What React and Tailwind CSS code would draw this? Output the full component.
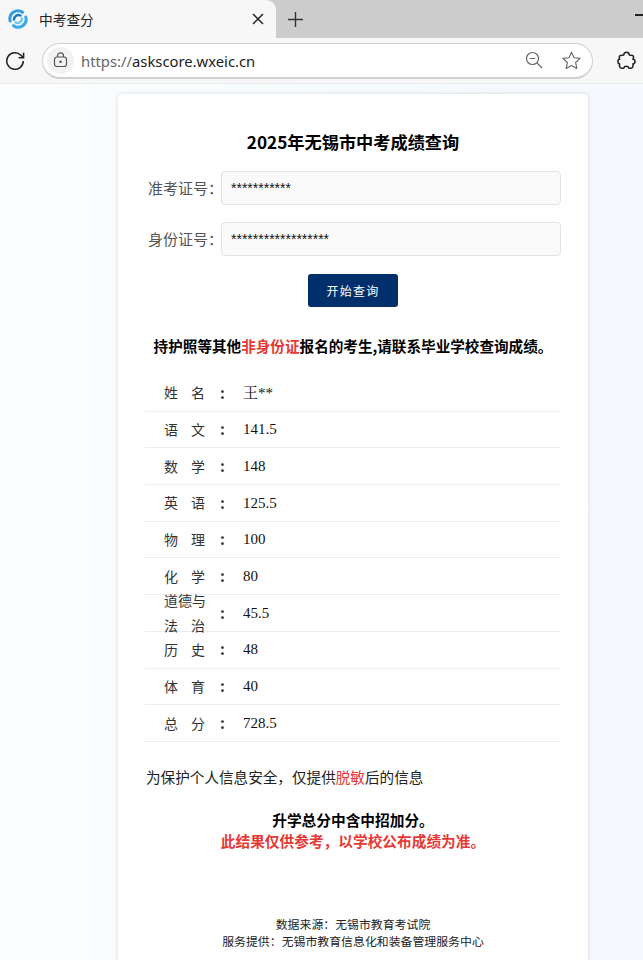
const cjk = "font-['Noto_Sans_CJK_SC','Noto_Sans',sans-serif]";

const scores = [
  { label: "姓名", value: "王**" },
  { label: "语文", value: "141.5" },
  { label: "数学", value: "148" },
  { label: "英语", value: "125.5" },
  { label: "物理", value: "100" },
  { label: "化学", value: "80" },
  { label: "道德与法治", value: "45.5" },
  { label: "历史", value: "48" },
  { label: "体育", value: "40" },
  { label: "总分", value: "728.5" },
];

function Logo() {
  return (
    <svg width="20" height="20" viewBox="0 0 20 20" fill="none" strokeLinecap="round">
      <path d="M2.200 12A8 8 0 0 1 14.500 3.300" stroke="#2f9fe0" strokeWidth="3" />
      <path d="M6 10.500A4.500 4.500 0 0 1 12.500 6.500" stroke="#1678c0" strokeWidth="2.500" />
      <path d="M17.800 8A8 8 0 0 1 5.500 16.700" stroke="#38a9e6" strokeWidth="3" />
      <path d="M14 9.500A4.500 4.500 0 0 1 7.500 13.500" stroke="#6fc8ee" strokeWidth="2.500" />
    </svg>
  );
}

function BrowserChrome() {
  return (
    <div className="bg-[#f7f7f7] border-b border-[#ebebeb]">
      <div className="flex h-[38px] bg-[#cdcdcd] overflow-hidden">
        <div className="flex items-center w-[276px] h-[38px] bg-[#f7f7f7] rounded-tr-[10px] pl-[8px] pr-[12px]">
          <Logo />
          <span className={`ml-[11px] flex-1 text-[13.700px] text-[#222] ${cjk}`}>中考查分</span>
          <svg width="12" height="12" viewBox="0 0 12 12" stroke="#222" strokeWidth="1.500" fill="none">
            <path d="M1 1l10 10M11 1L1 11" />
          </svg>
        </div>
        <div className="flex items-center ml-[11px] flex-1">
          <svg width="17" height="17" viewBox="0 0 17 17" stroke="#333" strokeWidth="1.400" fill="none">
            <path d="M8.500 1v15M1 8.500h15" />
          </svg>
          <div className="ml-auto w-[8px] h-[1.500px] bg-[#222] mb-[8px]" />
        </div>
      </div>
      <div className="flex items-center h-[45px] pl-[4px] pr-[6px]">
        <svg width="22" height="22" viewBox="0 0 20 20" stroke="#222" strokeWidth="1.400" fill="none" className="mr-[16px]">
          <path d="M17.500 10a7.500 7.500 0 1 1-2.300-5.400L17.500 7" />
          <path d="M17.800 2.500V7h-4.500" />
        </svg>
        <div className="flex items-center w-[551px] h-[36px] bg-white border border-[#d0d0d0] border-b-2 rounded-[18px] pl-[4px] pr-[10px]">
          <div className="flex items-center justify-center w-[27px] h-[27px] rounded-full bg-[#f2f2f2]">
            <svg width="15" height="16" viewBox="0 0 15 16" stroke="#555" strokeWidth="1.200" fill="none">
              <rect x="1.500" y="5" width="12" height="9.500" rx="2.500" />
              <path d="M4.500 5V3.800a3 3 0 0 1 6 0V5" />
              <circle cx="7.500" cy="9.800" r="0.700" fill="#555" />
            </svg>
          </div>
          <span className="ml-[7px] mt-[3px] flex-1 text-[14.800px] font-['Noto_Sans',sans-serif] text-[#222]">
            <span className="text-[#666]">https://</span>askscore.wxeic.cn
          </span>
          <svg width="18" height="18" viewBox="0 0 18 18" stroke="#666" strokeWidth="1.200" fill="none" className="mr-[18px]">
            <circle cx="7.500" cy="7.500" r="6" />
            <path d="M4.800 7.500h5.400M12 12l5 5" />
          </svg>
          <svg width="21" height="21" viewBox="0 0 24 24" stroke="#666" strokeWidth="1.300" fill="none" strokeLinejoin="round">
            <path d="M12 2.500l2.900 6.300 6.900.8-5.100 4.700 1.400 6.800-6.100-3.400-6.100 3.400 1.400-6.800-5.100-4.700 6.900-.8z" />
          </svg>
        </div>
        <svg width="21" height="21" viewBox="0 0 24 24" stroke="#222" strokeWidth="1.800" fill="none" strokeLinejoin="round" className="ml-auto">
          <path d="M9 5.500c0-4 6-4 6 0 0 1 3.500 0 4.500 1s.3 3.500-.2 4c3.200 0 3.200 5 0 5.500 .5 1.500.5 3-.5 4s-3 1-4.300.5c-.5-2.500-5-2.500-5.500 0-1.300.5-3.300.5-4.300-.5s-1-2.500-.5-4c-2.700-.5-2.700-5.500 0-5.500-.5-.5-.8-3 .2-4s4.600 0 4.600-1z" />
        </svg>
      </div>
    </div>
  );
}

function Field({ label, value }) {
  return (
    <div className="flex items-center">
      <label className={`w-[76px] pl-[3px] text-[15px] text-[#555] whitespace-nowrap ${cjk}`}>{label}：</label>
      <div className="flex items-center w-[340px] h-[34px] bg-[#fafafa] border border-[#e3e3e3] rounded-[4px] pl-[9px] text-[14px] font-['Liberation_Sans',sans-serif] text-[#111]">
        {value}
      </div>
    </div>
  );
}

function ScoreRow({ label, value }) {
  return (
    <div className="flex items-center h-[36.700px] border-b border-[#ececec]">
      <div className={`w-[41px] ml-[19px] text-[14px] text-[#333] ${cjk}`}>
        {label.length > 2 ? (
          <div className="leading-[25px] mt-[1px] whitespace-nowrap">
            <div>道德与</div>
            <div className="flex justify-between">
              <span>法</span>
              <span>治</span>
            </div>
          </div>
        ) : (
          <div className="flex justify-between">
            <span>{label[0]}</span>
            <span>{label[1]}</span>
          </div>
        )}
      </div>
      <span className={`w-[38px] pl-[15px] text-[15px] font-bold text-[#333] ${cjk}`}>:</span>
      <span className="text-[15px] text-[#111] font-['Liberation_Serif','Noto_Serif_CJK_SC','Noto_Sans_CJK_SC',serif]">{value}</span>
    </div>
  );
}

export default function App() {
  return (
    <div className="h-[960px] overflow-hidden bg-linear-to-r from-[#fcfeff] via-[#f6fbfd] to-[#f5f8fe]">
      <BrowserChrome />
      <div className="w-[470px] ml-[118px] mt-[10px] bg-white rounded-[4px] shadow-[0_0_4px_rgba(0,0,0,0.15)] px-[27px] h-[900px]">
        <h1 className={`pt-[35px] text-center text-[17.200px] leading-[26px] font-bold text-black ${cjk}`}>2025年无锡市中考成绩查询</h1>
        <div className="mt-[16px] flex flex-col gap-[17px]">
          <Field label="准考证号" value="***********" />
          <Field label="身份证号" value="******************" />
        </div>
        <div className="mt-[18px] flex justify-center">
          <button className={`w-[90px] h-[33px] bg-[#002f6c] rounded-[3px] text-white text-[12px] tracking-[1.200px] ${cjk}`}>开始查询</button>
        </div>
        <p className={`mt-[28px] text-center text-[14.600px] leading-[22px] font-bold text-black whitespace-nowrap ${cjk}`}>
          持护照等其他<span className="text-[#e53935]">非身份证</span>报名的考生,请联系毕业学校查询成绩。
        </p>
        <div className="mt-[18px]">
          {scores.map((s) => (
            <ScoreRow key={s.label} label={s.label} value={s.value} />
          ))}
        </div>
        <p className={`mt-[24px] ml-[1px] text-[14.600px] leading-[22px] text-[#222] ${cjk}`}>
          为保护个人信息安全，仅提供<span className="text-[#e53935]">脱敏</span>后的信息
        </p>
        <div className={`mt-[21px] text-center text-[14.700px] leading-[21px] font-bold ${cjk}`}>
          <p className="text-black">升学总分中含中招加分。</p>
          <p className="text-[#e53935]">此结果仅供参考，以学校公布成绩为准。</p>
        </div>
        <div className={`mt-[64px] text-center text-[11.900px] leading-[17px] text-[#222] ${cjk}`}>
          <p>数据来源：无锡市教育考试院</p>
          <p>服务提供：无锡市教育信息化和装备管理服务中心</p>
        </div>
      </div>
    </div>
  );
}
